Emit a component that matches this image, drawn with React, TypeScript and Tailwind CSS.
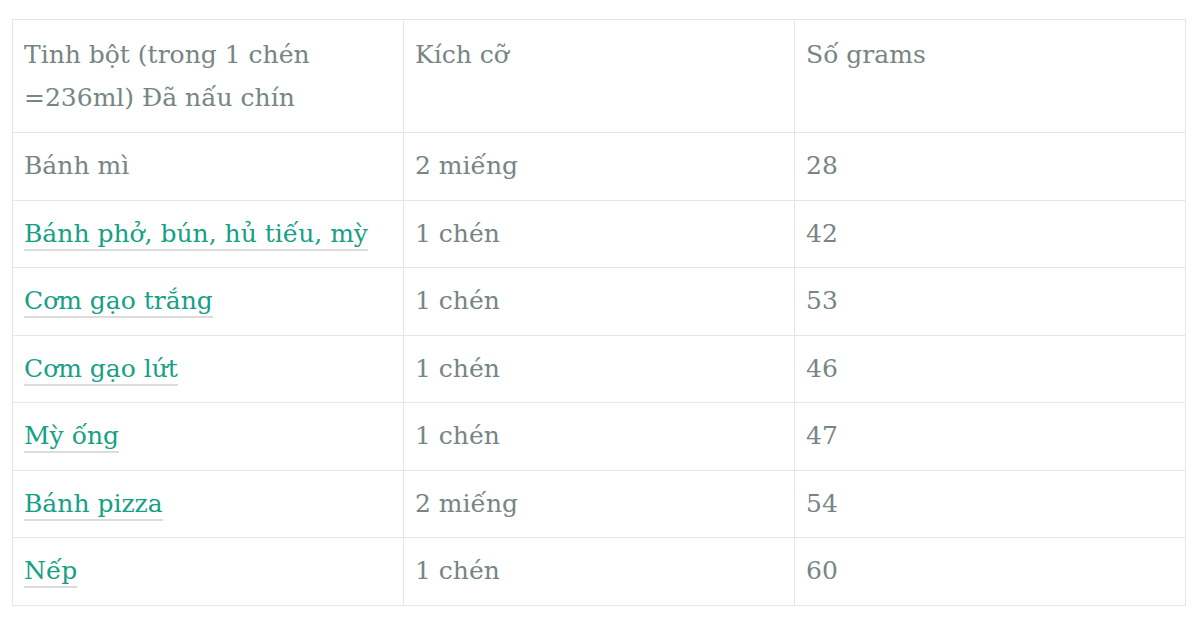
const rows: { name: string; size: string; grams: string; link?: boolean }[] = [
  { name: "Bánh mì", size: "2 miếng", grams: "28" },
  { name: "Bánh phở, bún, hủ tiếu, mỳ", size: "1 chén", grams: "42", link: true },
  { name: "Cơm gạo trắng", size: "1 chén", grams: "53", link: true },
  { name: "Cơm gạo lứt", size: "1 chén", grams: "46", link: true },
  { name: "Mỳ ống", size: "1 chén", grams: "47", link: true },
  { name: "Bánh pizza", size: "2 miếng", grams: "54", link: true },
  { name: "Nếp", size: "1 chén", grams: "60", link: true },
];

const cell = "border border-[#e6e6e6] px-[11px] py-3 align-top";

export default function App() {
  return (
    <div className="min-h-screen bg-white px-3 pt-[19px] text-[25px] leading-[42.5px] text-[#788585]" style={{ fontFamily: '"DejaVu Serif", "Liberation Serif", serif' }}>
      <table className="w-[1174px] table-fixed border-collapse">
        <tbody>
          <tr>
            <td className={`${cell} pt-[14px] pb-[13px]`}>Tinh bột (trong 1 chén =236ml) Đã nấu chín</td>
            <td className={`${cell} pt-[14px] pb-[13px]`}>Kích cỡ</td>
            <td className={`${cell} pt-[14px] pb-[13px]`}>Số grams</td>
          </tr>
          {rows.map((row) => (
            <tr key={row.name}>
              <td className={cell}>
                {row.link ? (
                  <a href="#" className="border-b-2 border-[#dcdcdc] pb-px text-[#16a085]">
                    {row.name}
                  </a>
                ) : (
                  row.name
                )}
              </td>
              <td className={cell}>{row.size}</td>
              <td className={cell}>{row.grams}</td>
            </tr>
          ))}
        </tbody>
      </table>
    </div>
  );
}
